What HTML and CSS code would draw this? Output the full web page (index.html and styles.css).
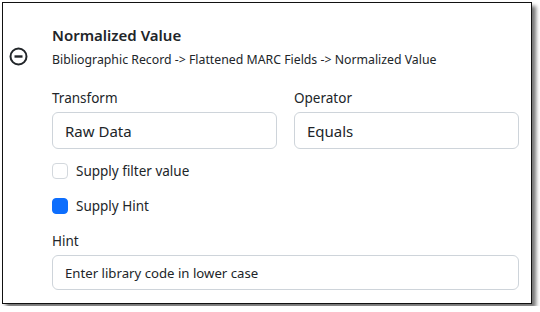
FILE: index.html
```html
<!DOCTYPE html>
<html lang="en">
<head>
  <meta charset="UTF-8">
  <title>Filter field</title>
  <link rel="stylesheet" href="styles.css">
</head>
<body>
  <div class="frame">
    <div class="field-row">
      <button class="remove-btn" type="button" aria-label="Remove">
        <svg width="19" height="19" viewBox="0 0 19 19">
          <circle cx="9.5" cy="9.5" r="8" fill="none" stroke="#212529" stroke-width="2"/>
          <line x1="5.5" y1="9.5" x2="13.5" y2="9.5" stroke="#212529" stroke-width="2.4"/>
        </svg>
      </button>

      <div class="field-body">
        <h2 class="field-title">Normalized Value</h2>
        <div class="field-path">Bibliographic Record -&gt; Flattened MARC Fields -&gt; Normalized Value</div>

        <div class="field-grid">
          <label class="field">
            <span class="field-label">Transform</span>
            <input class="control" type="text" value="Raw Data" readonly>
          </label>
          <label class="field">
            <span class="field-label">Operator</span>
            <input class="control" type="text" value="Equals" readonly>
          </label>
        </div>

        <label class="check">
          <span class="check-box"></span>
          Supply filter value
        </label>
        <label class="check">
          <span class="check-box checked"></span>
          Supply Hint
        </label>

        <label class="field">
          <span class="field-label">Hint</span>
          <input class="control control-sm" type="text" value="Enter library code in lower case" readonly>
        </label>
      </div>
    </div>
  </div>
</body>
</html>
```

FILE: styles.css
```css
body {
  margin: 0;
  background: #fff;
  color: #212529;
  font-family: "Segoe UI", "Noto Sans", sans-serif;
}

.frame {
  box-sizing: border-box;
  width: 530px;
  height: 302px;
  margin: 2px;
  border: 1px solid #111;
  background: #fff;
  box-shadow: 4px 4px 4px rgba(0, 0, 0, 0.55);
  overflow: hidden;
}

.field-row {
  display: flex;
  align-items: flex-start;
}

.remove-btn {
  flex: none;
  width: 19px;
  height: 19px;
  margin: 44px 0 0 6px;
  padding: 0;
  border: none;
  background: none;
}

.field-body {
  flex: 1;
  min-width: 0;
  margin-left: 24px;
  margin-right: 12px;
  padding-top: 21px;
}

.field-title {
  margin: 0;
  font-size: 15px;
  font-weight: 600;
  line-height: 22px;
}

.field-path {
  margin-top: 5px;
  font-size: 12.3px;
  line-height: 18px;
}

.field-grid {
  display: grid;
  grid-template-columns: minmax(0, 1fr) minmax(0, 1fr);
  gap: 17px;
  margin-top: 19px;
}

.field {
  display: flex;
  flex-direction: column;
  min-width: 0;
}

.field-label {
  font-size: 13.5px;
  line-height: 20px;
  margin-bottom: 4px;
}

.control {
  box-sizing: border-box;
  width: 100%;
  min-width: 0;
  height: 37px;
  padding: 0 12px;
  border: 1px solid #ced4da;
  border-radius: 6px;
  background: #fff;
  color: #212529;
  font-family: inherit;
  font-size: 15px;
  outline: none;
}

.control-sm {
  height: 35px;
  font-size: 13.2px;
}

.check {
  display: flex;
  align-items: center;
  gap: 8px;
  font-size: 13.5px;
  line-height: 20px;
}

.check:first-of-type {
  margin-top: 12px;
}

.check + .check {
  margin-top: 15px;
}

.check + .field {
  margin-top: 15px;
}

.check-box {
  box-sizing: border-box;
  width: 16px;
  height: 16px;
  border: 1px solid #d3d8dd;
  border-radius: 4px;
  background: #fff;
}

.check-box.checked {
  border-color: #0d6efd;
  background: #0d6efd;
}
```
